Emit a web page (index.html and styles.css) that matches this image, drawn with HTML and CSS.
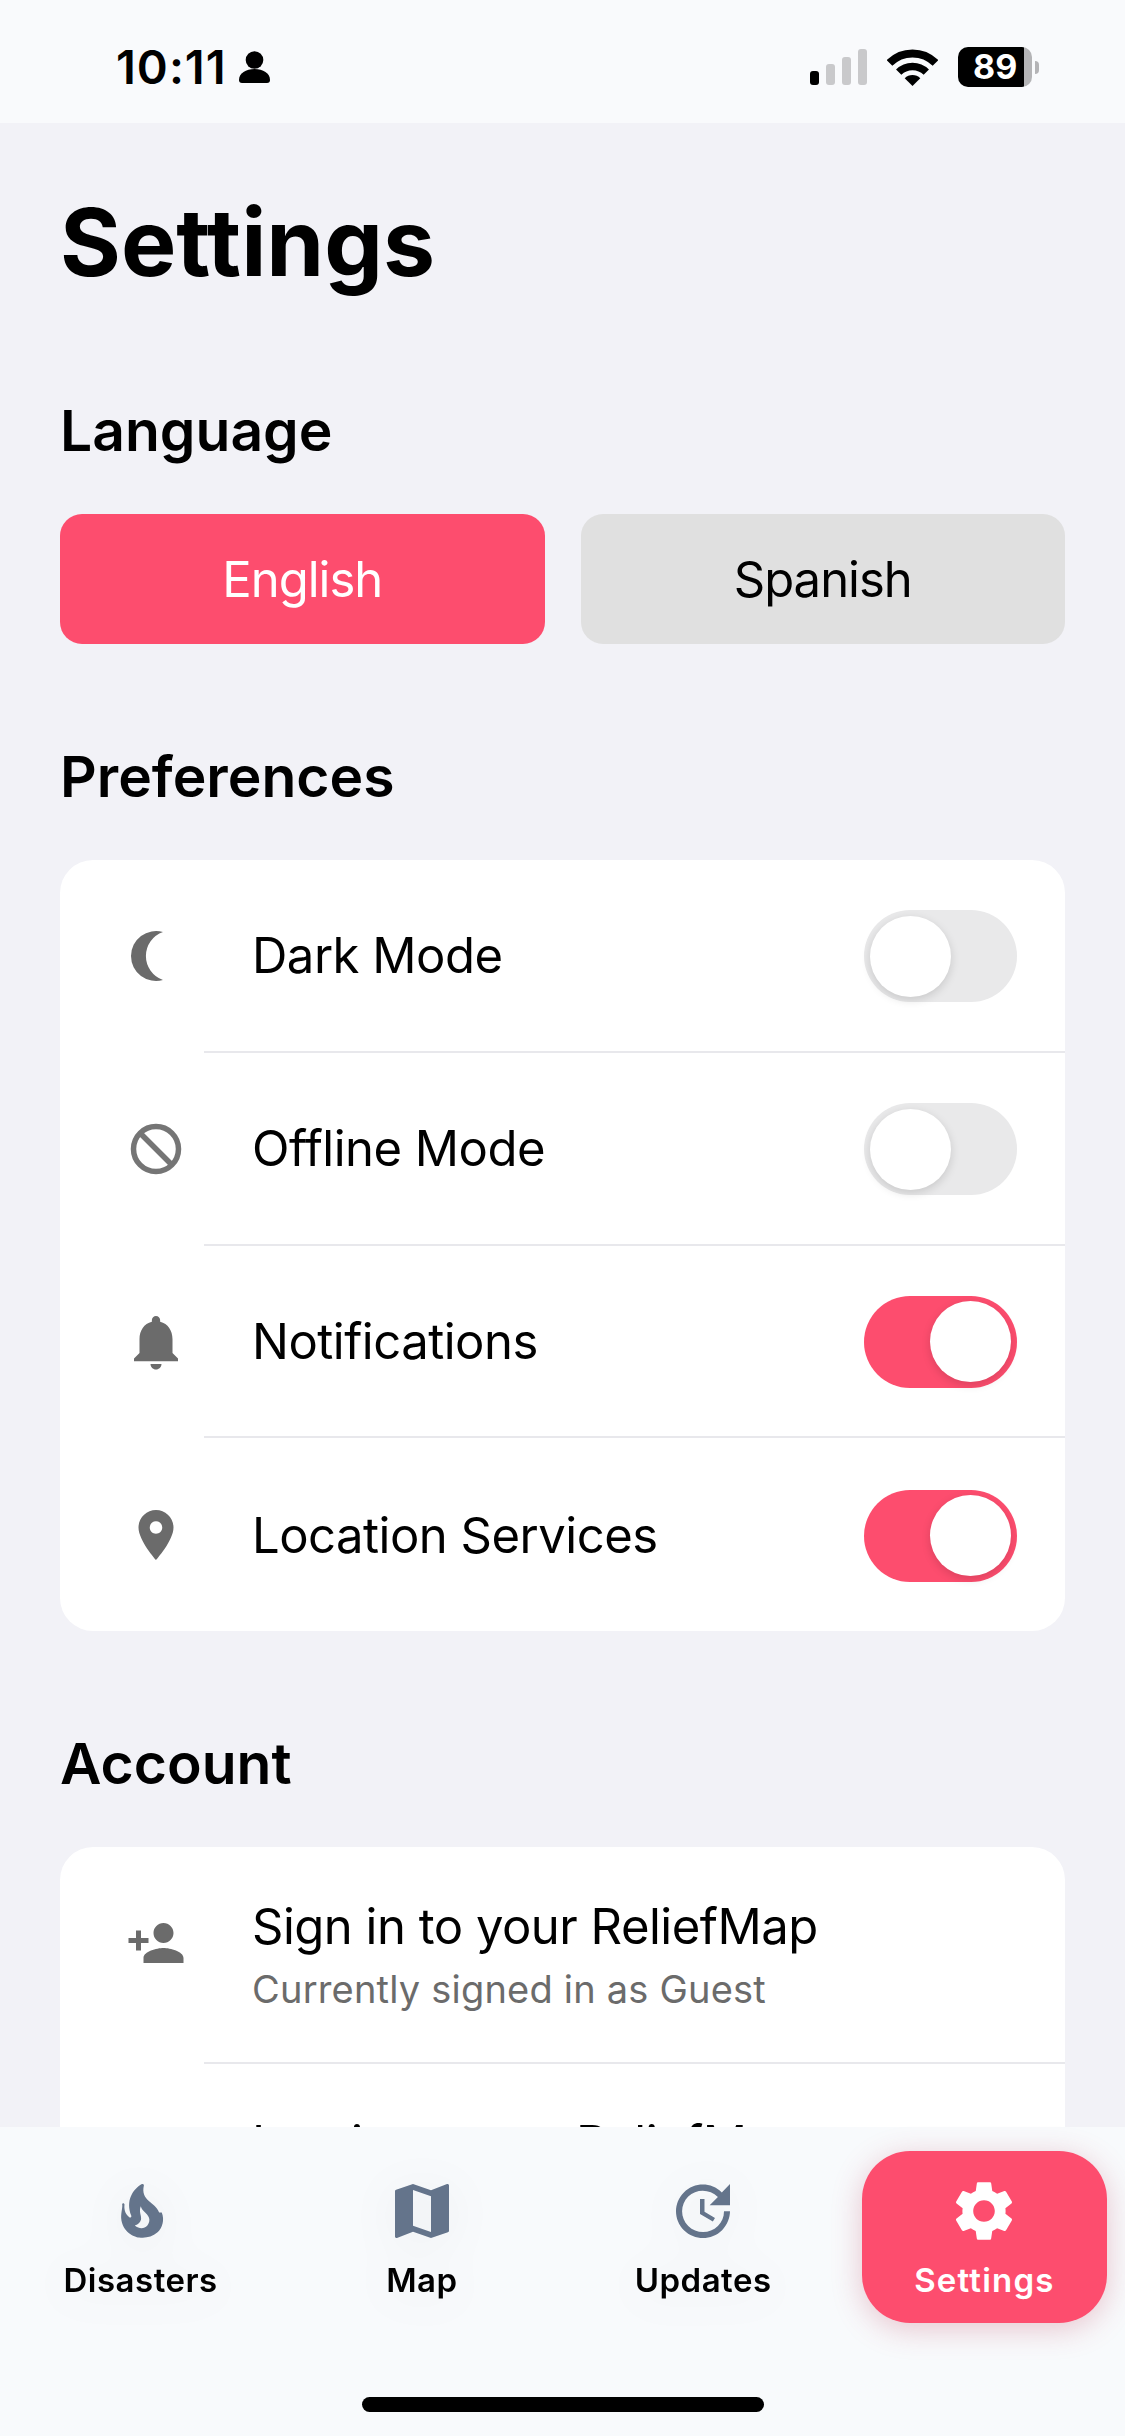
FILE: index.html
```html
<!DOCTYPE html>
<html lang="en">
<head>
    <meta charset="UTF-8">
    <title>Settings</title>
    <link rel="stylesheet" href="styles.css">
</head>
<body>

<div class="status-bar">
    <div class="status-left">
        <span class="time">10:11</span>
        <svg class="status-person" viewBox="0 0 31 32"><circle cx="15.5" cy="9" r="8.8"/><path d="M0 29C0 22 7 18 15.5 18S31 22 31 29Q31 32 28 32H3Q0 32 0 29Z"/></svg>
    </div>
    <div class="status-right">
        <div class="signal">
            <span class="bar bar-1"></span>
            <span class="bar bar-2"></span>
            <span class="bar bar-3"></span>
            <span class="bar bar-4"></span>
        </div>
        <svg class="wifi" viewBox="0 0 51 37"><path d="M2.500 14A32.500 32.500 0 0 1 48.500 14" fill="none" stroke="#000" stroke-width="8"/><path d="M11.700 23.200A19.500 19.500 0 0 1 39.300 23.200" fill="none" stroke="#000" stroke-width="7.500"/><path d="M25.500 37L17.700 29.200A11 11 0 0 1 33.300 29.200Z"/></svg>
        <div class="battery"><span class="battery-level">89</span></div>
        <span class="battery-nub"></span>
    </div>
</div>

<main class="content">
    <h1 class="page-title">Settings</h1>

    <h2 class="section-title">Language</h2>
    <div class="lang-buttons">
        <button class="lang-btn active">English</button>
        <button class="lang-btn">Spanish</button>
    </div>

    <h2 class="section-title">Preferences</h2>
    <div class="card">
        <div class="row">
            <div class="row-icon">
                <svg class="icon" viewBox="0 0 60 60"><path d="M37 6A25 25 0 1 0 37 54A25.400 25.400 0 0 1 37 6Z"/></svg>
            </div>
            <div class="row-body">
                <span class="row-title">Dark Mode</span>
                <span class="switch"><span class="thumb"></span></span>
            </div>
        </div>
        <div class="row">
            <div class="row-icon">
                <svg class="icon icon-ban" viewBox="0 0 60 60"><circle cx="30" cy="30" r="22.500" fill="none" stroke-width="5.500"/><line x1="14" y1="14" x2="46" y2="46" stroke-width="5.500"/></svg>
            </div>
            <div class="row-body">
                <span class="row-title">Offline Mode</span>
                <span class="switch"><span class="thumb"></span></span>
            </div>
        </div>
        <div class="row">
            <div class="row-icon">
                <svg class="icon icon-bell" viewBox="0 0 24 24"><path d="M12 22c1.100 0 2-.9 2-2h-4c0 1.100.89 2 2 2zm6-6v-5c0-3.070-1.640-5.640-4.500-6.320V4c0-.83-.67-1.500-1.500-1.500s-1.500.67-1.500 1.500v.68C7.630 5.360 6 7.920 6 11v5l-2 2v1h16v-1l-2-2z"/></svg>
            </div>
            <div class="row-body">
                <span class="row-title">Notifications</span>
                <span class="switch on"><span class="thumb"></span></span>
            </div>
        </div>
        <div class="row">
            <div class="row-icon">
                <svg class="icon" viewBox="0 0 24 24"><path d="M12 2C8.130 2 5 5.130 5 9c0 5.250 7 13 7 13s7-7.750 7-13c0-3.870-3.130-7-7-7zm0 9.500c-1.380 0-2.500-1.120-2.500-2.500s1.120-2.500 2.500-2.500 2.500 1.120 2.500 2.500-1.120 2.500-2.500 2.500z"/></svg>
            </div>
            <div class="row-body">
                <span class="row-title">Location Services</span>
                <span class="switch on"><span class="thumb"></span></span>
            </div>
        </div>
    </div>

    <h2 class="section-title">Account</h2>
    <div class="card">
        <div class="row row-tall">
            <div class="row-icon">
                <svg class="icon" viewBox="0 0 24 24"><path d="M15 12c2.210 0 4-1.790 4-4s-1.790-4-4-4-4 1.790-4 4 1.790 4 4 4zm-9-2V7H4v3H1v2h3v3h2v-3h3v-2H6zm9 4c-2.670 0-8 1.340-8 4v2h16v-2c0-2.660-5.330-4-8-4z"/></svg>
            </div>
            <div class="row-body">
                <div class="row-text">
                    <span class="row-title">Sign in to your ReliefMap</span>
                    <span class="row-sub">Currently signed in as Guest</span>
                </div>
            </div>
        </div>
        <div class="row row-tall">
            <div class="row-icon"></div>
            <div class="row-body">
                <div class="row-text">
                    <span class="row-title">Log in to your ReliefMap</span>
                </div>
            </div>
        </div>
    </div>
</main>

<nav class="tab-bar">
    <div class="tabs">
        <div class="tab">
            <svg class="tab-icon tab-icon-fire" viewBox="0 0 24 24"><path d="M19.480 12.350c-1.570-4.080-7.160-4.300-5.810-10.230.1-.44-.37-.78-.75-.55C9.290 3.710 6.680 8 8.870 13.620c.18.46-.36.89-.75.59-1.810-1.370-2-3.340-1.840-4.750.06-.52-.62-.77-.91-.34C5.690 10.160 5 11.840 5 14.370c.38 5.600 5.110 7.320 6.810 7.540 2.430.31 5.060-.14 6.950-1.870 2.080-1.930 2.840-5.010 1.720-7.690zm-9.280 5.030c1.440-.35 2.180-1.390 2.380-2.310.33-1.430-.96-2.830-.09-5.090.33 1.870 3.270 3.040 3.270 5.080.08 2.530-2.660 4.700-5.560 2.320z"/></svg>
            <span class="tab-label">Disasters</span>
        </div>
        <div class="tab">
            <svg class="tab-icon" viewBox="0 0 24 24"><path d="M20.500 3l-.16.03L15 5.100 9 3 3.360 4.900c-.21.07-.36.25-.36.48V20.500c0 .28.22.5.5.5l.16-.03L9 18.900l6 2.100 5.640-1.900c.21-.07.36-.25.36-.48V3.500c0-.28-.22-.5-.5-.5zM15 19l-6-2.110V5l6 2.110V19z"/></svg>
            <span class="tab-label">Map</span>
        </div>
        <div class="tab">
            <svg class="tab-icon" viewBox="0 0 24 24"><path d="M21 10.120h-6.780l2.740-2.820c-2.730-2.700-7.150-2.800-9.880-.1-2.730 2.710-2.730 7.080 0 9.790s7.150 2.710 9.880 0C18.320 15.650 19 14.080 19 12.100h2c0 1.980-.88 4.550-2.640 6.290-3.510 3.480-9.210 3.480-12.720 0-3.500-3.470-3.530-9.110-.02-12.580s9.140-3.470 12.650 0L21 3v7.120zM12.500 8v4.250l3.500 2.080-.72 1.210L11 13V8h1.500z"/></svg>
            <span class="tab-label">Updates</span>
        </div>
        <div class="tab active">
            <svg class="tab-icon" viewBox="0 0 24 24"><path d="M19.140 12.940c.04-.3.06-.61.06-.94 0-.32-.02-.64-.07-.94l2.030-1.580c.18-.14.23-.41.12-.61l-1.920-3.320c-.12-.22-.37-.29-.59-.22l-2.390.96c-.5-.38-1.030-.7-1.620-.94l-.36-2.540c-.04-.24-.24-.41-.48-.41h-3.840c-.24 0-.43.17-.47.41l-.36 2.540c-.59.24-1.130.57-1.620.94l-2.390-.96c-.22-.08-.47 0-.59.22L2.740 8.870c-.12.21-.08.47.12.61l2.030 1.580c-.05.3-.09.63-.09.94s.02.64.07.94l-2.030 1.580c-.18.14-.23.41-.12.61l1.920 3.320c.12.22.37.29.59.22l2.390-.96c.5.38 1.030.7 1.620.94l.36 2.540c.05.24.24.41.48.41h3.840c.24 0 .44-.17.47-.41l.36-2.540c.59-.24 1.130-.56 1.620-.94l2.390.96c.22.08.47 0 .59-.22l1.920-3.320c.12-.22.07-.47-.12-.61l-2.010-1.580zM12 15.600c-1.980 0-3.600-1.620-3.600-3.600s1.620-3.600 3.600-3.600 3.600 1.620 3.600 3.600-1.620 3.600-3.600 3.600z"/></svg>
            <span class="tab-label">Settings</span>
        </div>
    </div>
    <div class="home-indicator"></div>
</nav>

</body>
</html>
```

FILE: styles.css
```css
* {
    box-sizing: border-box;
}
body {
    font-family: Inter, "Liberation Sans", sans-serif;
    background-color: #f2f2f7;
    color: #000;
    margin: 0;
    height: 2436px;
    display: flex;
    flex-direction: column;
    overflow: hidden;
}

/* status bar */
.status-bar {
    height: 123px;
    flex: none;
    background-color: #f9fafc;
    display: flex;
    align-items: center;
    justify-content: space-between;
    padding: 11px 86px 0 116px;
}
.status-left, .status-right {
    display: flex;
    align-items: center;
}
.time {
    font-size: 47px;
    font-weight: 600;
    line-height: 46px;
    letter-spacing: 1px;
}
.status-person {
    width: 31px;
    height: 32px;
    margin-left: 12px;
}
.signal {
    display: flex;
    align-items: flex-end;
    gap: 7px;
    height: 36px;
    margin-right: 20px;
}
.bar {
    width: 9px;
    border-radius: 3px;
    background-color: #c9c9cb;
}
.bar-1 { height: 14px; background-color: #000; }
.bar-2 { height: 21px; }
.bar-3 { height: 28px; }
.bar-4 { height: 36px; }
.wifi {
    width: 51px;
    height: 37px;
    margin-right: 20px;
}
.battery {
    width: 74px;
    height: 40px;
    border-radius: 10px;
    background: linear-gradient(90deg, #000 89%, #b4b4b6 89%);
    display: flex;
    align-items: center;
    padding-left: 15px;
}
.battery-level {
    color: #fff;
    font-size: 34px;
    font-weight: 700;
    line-height: 40px;
}
.battery-nub {
    width: 4px;
    height: 13px;
    margin-left: 3px;
    border-radius: 0 4px 4px 0;
    background-color: #b4b4b6;
}

/* page */
.content {
    flex: 1;
    min-height: 0;
    overflow: hidden;
    padding: 64px 60px 0;
}
.page-title {
    font-size: 93px;
    font-weight: 700;
    line-height: 110px;
    margin: 0 0 104px;
}
.section-title {
    font-size: 57px;
    font-weight: 600;
    line-height: 60px;
    margin: 103px 0 53px;
}
.lang-buttons {
    display: flex;
    gap: 36px;
}
.lang-btn {
    flex: 1;
    height: 130px;
    border: none;
    border-radius: 22px;
    font-family: inherit;
    font-size: 49px;
    letter-spacing: -1px;
    color: #000;
    background-color: #e0e0e0;
}
.lang-btn.active {
    background-color: #fd4d6e;
    color: #fff;
}

/* cards */
.card {
    background-color: #fff;
    border-radius: 33px;
    overflow: hidden;
}
.row {
    display: flex;
    height: 192.75px;
}
.row-tall {
    height: 217px;
}
.row-icon {
    width: 144px;
    padding-left: 48px;
    display: flex;
    align-items: center;
    justify-content: center;
    flex: none;
}
.row-body {
    flex: 1;
    display: flex;
    align-items: center;
    justify-content: space-between;
    padding: 2px 48px 0;
    border-bottom: 2px solid #e8e8ec;
}
.row:last-child .row-body {
    border-bottom: none;
}
.row-tall .row-icon {
    align-items: flex-start;
    padding-top: 66px;
}
.row-tall .row-body {
    align-items: flex-start;
    padding-top: 50px;
}
.row-text {
    display: flex;
    flex-direction: column;
    gap: 8px;
}
.row-title {
    font-size: 49px;
    line-height: 60px;
    letter-spacing: -0.5px;
}
.row-sub {
    font-size: 38px;
    line-height: 48px;
    letter-spacing: 0.2px;
    color: #6b6b6b;
}
.icon {
    width: 60px;
    height: 60px;
    fill: #6b6b6b;
}
.icon-ban {
    fill: none;
    stroke: #757575;
}
.icon-bell {
    width: 66px;
    height: 66px;
}

/* switches */
.switch {
    width: 153px;
    height: 92px;
    padding: 6px;
    border-radius: 46px;
    background-color: #e9e9ea;
    display: flex;
    align-items: center;
}
.switch.on {
    background-color: #fd4d6e;
    justify-content: flex-end;
}
.thumb {
    width: 81px;
    height: 81px;
    border-radius: 50%;
    background-color: #fff;
    box-shadow: 0 3px 10px rgba(0, 0, 0, 0.14);
}

/* tab bar */
.tab-bar {
    height: 309px;
    flex: none;
    background-color: #f8fafc;
    display: flex;
    flex-direction: column;
    align-items: center;
    padding-top: 24px;
}
.tabs {
    width: 100%;
    display: grid;
    grid-template-columns: repeat(4, 1fr);
    justify-items: center;
}
.tab {
    width: 245px;
    height: 172px;
    padding-top: 24px;
    border-radius: 48px;
    display: flex;
    flex-direction: column;
    align-items: center;
    gap: 13px;
    filter: drop-shadow(0 4px 22px rgba(0, 0, 0, 0.05));
}
.tab-icon {
    width: 72px;
    height: 72px;
    fill: #64748b;
}
.tab-icon-fire {
    width: 63px;
    height: 63px;
    margin: 5px 3px 4px 0;
}
.tab-label {
    font-size: 33px;
    font-weight: 600;
    line-height: 40px;
    letter-spacing: 0.5px;
}
.tab.active {
    background-color: #fd4d6e;
    color: #fff;
    filter: none;
    box-shadow: 0 6px 30px rgba(190, 60, 85, 0.28);
}
.tab.active .tab-icon {
    fill: #fff;
}
.tab.active .tab-label {
    letter-spacing: 1.2px;
}
.home-indicator {
    width: 402px;
    height: 15px;
    margin-top: 74px;
    border-radius: 8px;
    background-color: #000;
}
```
